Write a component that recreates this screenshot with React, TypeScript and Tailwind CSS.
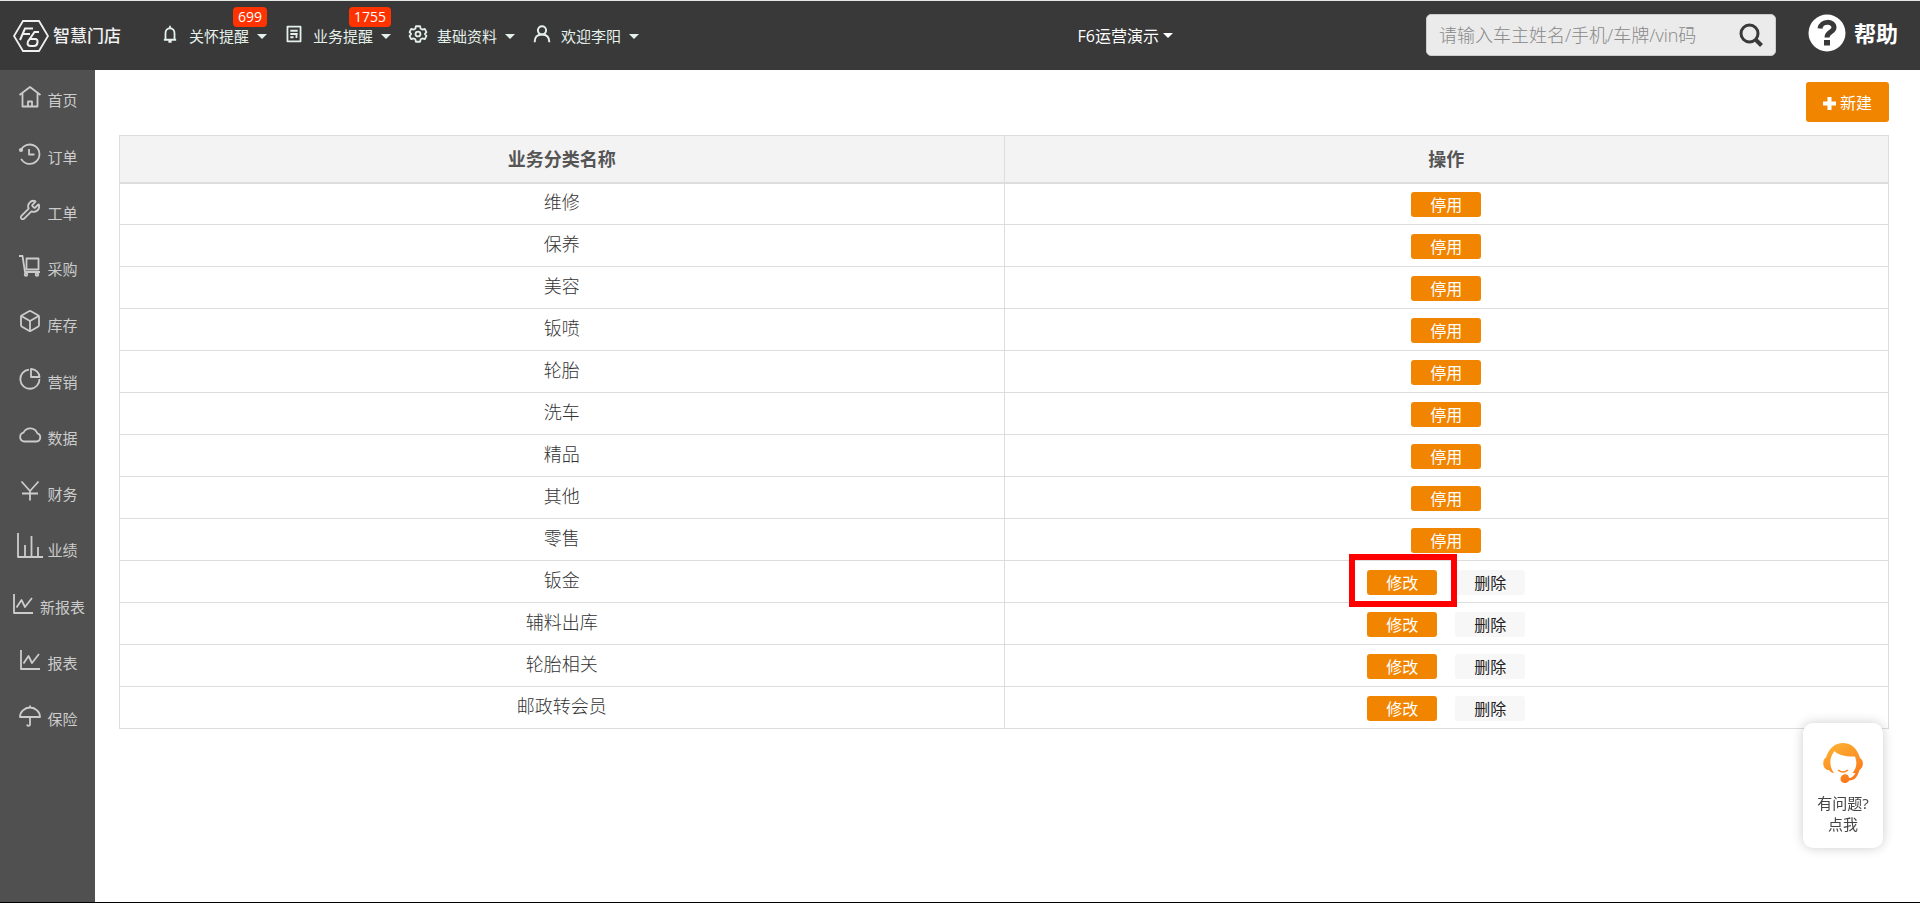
import type { ReactNode } from "react";
import { Box, Wrench } from "lucide-react";

const font = "font-['Open_Sans','Noto_Sans_CJK_SC',sans-serif]";

function Icon({ children, className = "size-[22px]" }: { children: ReactNode; className?: string }) {
  return (
    <svg
      viewBox="0 0 22 22"
      fill="none"
      stroke="currentColor"
      strokeWidth="1.8"
      strokeLinejoin="round"
      className={`${className} shrink-0 overflow-visible`}
      aria-hidden="true"
    >
      {children}
    </svg>
  );
}

function Caret() {
  return <span className="border-x-5 border-t-5 border-x-transparent border-t-current" />;
}

const lineChart = (
  <Icon>
    <path d="M2 1v19h19M4.500 14.500l5-7.500 3.500 7 7-9" />
  </Icon>
);

const menu: { label: string; icon: ReactNode }[] = [
  {
    label: "首页",
    icon: (
      <Icon>
        <path d="M.500 9 11 1l10.500 8M3.500 7.500V20.500h15V7.500M9 20v-4.500h4V20" />
      </Icon>
    ),
  },
  {
    label: "订单",
    icon: (
      <Icon>
        <path d="M1.800 7.500a9.700 9.700 0 1 1 .4 8.300M10 6v5.500h5.500" />
        <circle cx="2" cy="7" r="1.200" fill="currentColor" />
      </Icon>
    ),
  },
  { label: "工单", icon: <Wrench className="size-[22px] shrink-0" strokeWidth={2} /> },
  {
    label: "采购",
    icon: (
      <Icon>
        <path d="M0 1h3.500l2.500 16h15M7.500 3.500h12v11h-12z" />
        <circle cx="7" cy="19.500" r="1.300" />
        <circle cx="18" cy="19.500" r="1.300" />
      </Icon>
    ),
  },
  { label: "库存", icon: <Box className="-mx-px size-6 shrink-0" strokeWidth={1.8} /> },
  {
    label: "营销",
    icon: (
      <Icon>
        <path d="M10 1.600A9.600 9.600 0 1 0 20.500 11" />
        <path d="M12 1v8h8.500A8.500 8.500 0 0 0 12 1z" />
      </Icon>
    ),
  },
  {
    label: "数据",
    icon: (
      <Icon>
        <path d="M5 17.500h12.500a4.200 4.200 0 0 0 .8-8.200A7.500 7.500 0 0 0 4.500 8.700 4.500 4.500 0 0 0 5 17.500z" />
      </Icon>
    ),
  },
  {
    label: "财务",
    icon: (
      <Icon>
        <path d="M2.500 1.500 11 11l8.500-9.500M11 11v9.500M3 13.500h16" />
      </Icon>
    ),
  },
  {
    label: "业绩",
    icon: (
      <Icon>
        <path d="M-1 -3v24h25M6 20.500V9M12.500 20.500V0M19 20.500V11" />
      </Icon>
    ),
  },
  { label: "新报表", icon: lineChart },
  { label: "报表", icon: lineChart },
  {
    label: "保险",
    icon: (
      <Icon>
        <path d="M1 12a10 9.500 0 0 1 20 0zM11 .500V3M11 12v7a1.500 1.500 0 0 1-3 .5" />
      </Icon>
    ),
  },
];

const navItems: { label: string; badge?: string; icon: ReactNode }[] = [
  {
    label: "关怀提醒",
    badge: "699",
    icon: (
      <Icon className="size-[18px]">
        <path strokeWidth="2.200" d="M5.500 17.500V10a5.500 6 0 0 1 11 0v7.500M3.500 18h15M11 1v3M9 20.500h4" />
      </Icon>
    ),
  },
  {
    label: "业务提醒",
    badge: "1755",
    icon: (
      <Icon className="size-[18px]">
        <path strokeWidth="2.200" d="M3 2h16v18H3zM6.500 7h9M6.500 11h9M6.500 15h4M14 11v5" />
      </Icon>
    ),
  },
  {
    label: "基础资料",
    icon: (
      <Icon className="size-[18px]">
        <path
          strokeWidth="2.200"
          d="M8.500 1.500h5l.8 3 2 1.100 3-.9 2 4-2 2.300 2 2.300-2 4-3-.9-2 1.100-.8 3h-5l-.8-3-2-1.100-3 .9-2-4 2-2.300-2-2.300 2-4 3 .9 2-1.100z"
        />
        <circle cx="11" cy="11" r="3" strokeWidth="2.200" />
      </Icon>
    ),
  },
  {
    label: "欢迎李阳",
    icon: (
      <Icon className="size-[18px]">
        <circle cx="11" cy="6.500" r="5" strokeWidth="2.400" />
        <path strokeWidth="2.400" d="M2 21c0-6 3-9.500 9-9.500s9 3.500 9 9.500" />
      </Icon>
    ),
  },
];

const rows: { name: string; custom?: boolean; marked?: boolean }[] = [
  { name: "维修" },
  { name: "保养" },
  { name: "美容" },
  { name: "钣喷" },
  { name: "轮胎" },
  { name: "洗车" },
  { name: "精品" },
  { name: "其他" },
  { name: "零售" },
  { name: "钣金", custom: true, marked: true },
  { name: "辅料出库", custom: true },
  { name: "轮胎相关", custom: true },
  { name: "邮政转会员", custom: true },
];

function Header() {
  return (
    <header className="flex h-[70px] items-center border-t border-[#e4e8e6] bg-[#393939] pl-[13px] text-[#e4f0ea]">
      <a href="#" className="flex items-center gap-1 text-[#f0f0f0]">
        <svg viewBox="0 0 36 32" className="h-8 w-9" fill="none" stroke="currentColor" strokeWidth="1.800" aria-hidden="true">
          <path d="M10 1h16l9 15-9 15H10L1 16z" />
          <path d="M7 20 12 8.500h8M10 14h7" strokeWidth="2" />
          <path d="M26 12h-4.500l-6.500 9.500q-1.500 4.500 3 4.500h3q3 0 3.500-3.500t-2.500-3.500h-5" strokeWidth="2" />
        </svg>
        <span className="text-[17px] leading-6 font-medium">智慧门店</span>
      </a>

      <nav className="ml-10 flex items-center gap-[18px]">
        {navItems.map((item) => (
          <button key={item.label} type="button" className="relative flex items-center text-[15px] leading-6">
            <span className="mb-1 mr-[10px]">{item.icon}</span>
            {item.label}
            <span className="ml-2 flex pt-px">
              <Caret />
            </span>
            {item.badge && (
              <span className="absolute -top-[17px] right-0 rounded bg-[#ff3300] px-[5px] text-sm leading-5 text-white">
                {item.badge}
              </span>
            )}
          </button>
        ))}
      </nav>

      <button type="button" className="ml-auto mr-[253px] flex items-center gap-1 text-base text-white">
        F6运营演示
        <Caret />
      </button>

      <form className="mb-px flex h-[42px] w-[350px] items-center rounded-[5px] border border-[#ccc] bg-[#ebebeb] px-3">
        <input
          type="text"
          aria-label="搜索"
          placeholder="请输入车主姓名/手机/车牌/vin码"
          className="min-w-0 flex-1 bg-transparent text-[18px] font-light text-[#333] outline-none placeholder:text-[#888]"
        />
        <button type="button" aria-label="查询" className="text-[#393939]">
          <svg viewBox="0 0 24 24" className="size-6" fill="none" stroke="currentColor" aria-hidden="true">
            <circle cx="10.500" cy="10.500" r="8.500" strokeWidth="3" />
            <path d="m16.500 16.500 6 6" strokeWidth="4" />
          </svg>
        </button>
      </form>

      <a href="#" className="mr-[22px] mb-[6px] ml-8 flex items-center gap-2 text-white">
        <svg viewBox="0 0 38 38" className="size-[38px]" aria-hidden="true">
          <circle cx="19" cy="19" r="18.500" fill="currentColor" />
          <path d="M12 14.500c1-8 14-8 14-1 0 5-7 4-7 10" fill="none" stroke="#393939" strokeWidth="5" />
          <path d="M16 26h6v5.500h-6z" fill="#393939" />
        </svg>
        <span className="text-[22px] leading-8 font-bold">帮助</span>
      </a>
    </header>
  );
}

function Sidebar() {
  return (
    <aside className="w-[95px] shrink-0 bg-[#505050] text-[#ccc]">
      <nav className="flex h-[675px] flex-col">
        {menu.map((item) => (
          <a
            key={item.label}
            href="#"
            className="flex flex-1 items-end justify-center gap-[6px] pb-4 pl-[2px] text-[15px] leading-5"
          >
            <span className="mb-[2px]">{item.icon}</span>
            {item.label}
          </a>
        ))}
      </nav>
    </aside>
  );
}

const actionButton = "h-[25px] w-[70px] rounded-[3px] pt-[2px] text-base leading-[23px]";

function Actions({ custom, marked }: { custom?: boolean; marked?: boolean }) {
  if (!custom) {
    return (
      <button type="button" className={`${actionButton} bg-[#f18500] text-white`}>
        停用
      </button>
    );
  }
  return (
    <>
      <span className="relative flex">
        <button type="button" className={`${actionButton} bg-[#f18500] text-white`}>
          修改
        </button>
        {marked && (
          <span className="absolute -top-4 -right-5 -bottom-3 -left-[18px] border-6 border-[#fe0000]" />
        )}
      </span>
      <button type="button" className={`${actionButton} bg-[#f7f7f7] text-[#222]`}>
        删除
      </button>
    </>
  );
}

function CategoryTable() {
  return (
    <table className="w-full table-fixed border-collapse text-center text-[18px] text-[#555]">
      <thead>
        <tr className="h-[47px] bg-[#f3f3f3]">
          <th className="border border-b-2 border-[#ddd] p-0 pt-[2px] font-bold">业务分类名称</th>
          <th className="border border-b-2 border-[#ddd] p-0 pt-[2px] font-bold">操作</th>
        </tr>
      </thead>
      <tbody>
        {rows.map((row) => (
          <tr key={row.name} className="h-[42px]">
            <td className="border border-[#ddd] p-0 pb-1 leading-6 font-light text-[#333]">{row.name}</td>
            <td className="border border-[#ddd] p-0">
              <div className="flex justify-center gap-[18px] pt-[2px]">
                <Actions custom={row.custom} marked={row.marked} />
              </div>
            </td>
          </tr>
        ))}
      </tbody>
    </table>
  );
}

function HelpCard() {
  return (
    <button
      type="button"
      className="fixed right-[37px] bottom-[55px] flex h-[125px] w-20 flex-col items-center rounded-[10px] bg-white pt-5 text-[15px] leading-[21px] text-[#444] shadow-[0_0_12px_rgba(0,0,0,0.2)]"
    >
      <svg viewBox="0 0 40 40" className="mb-[10px] size-10" aria-hidden="true">
        <defs>
          <linearGradient id="headset" x1="0" y1="0" x2="0.5" y2="1">
            <stop offset="0" stopColor="#fdb735" />
            <stop offset="1" stopColor="#fb7a1c" />
          </linearGradient>
        </defs>
        <path
          fill="url(#headset)"
          d="M11 30C6 23 6 15 11.500 8c4 4.500 13 6 20.500 5.500 2.500 6 1.500 12-2.500 16.500l3 .2C30.500 33.500 29 34.800 26 35c-.5-6-8.500-4-8.500 1 0 5 8 5 8.500 1.500 6 0 8.500-4 10.500-10.500 4.500-3 4.500-10 .5-12C34 5 28 0 20 0S6 5 3 14.500C-1.500 17-.5 27 6 27c1 1.500 2.500 3 5 3z"
        />
        <path d="M15 27q5 4 10 0" fill="none" stroke="#fb8a22" strokeWidth="1.500" />
      </svg>
      <span>有问题?</span>
      <span>点我</span>
    </button>
  );
}

export default function App() {
  return (
    <div className={`${font} flex min-h-screen flex-col border-b border-black bg-white`}>
      <Header />
      <div className="flex flex-1">
        <Sidebar />
        <main className="min-w-0 flex-1 pt-3 pr-[31px] pl-6">
          <div className="mb-[13px] flex justify-end">
            <button
              type="button"
              className="flex h-10 w-[83px] items-center justify-center gap-1 rounded-[3px] bg-[#f18500] pt-[2px] text-base text-white"
            >
              <svg viewBox="0 0 13 13" className="size-[13px]" stroke="currentColor" strokeWidth="4" aria-hidden="true">
                <path d="M6.500 0v13M0 6.500h13" />
              </svg>
              新建
            </button>
          </div>
          <CategoryTable />
        </main>
      </div>
      <HelpCard />
    </div>
  );
}
